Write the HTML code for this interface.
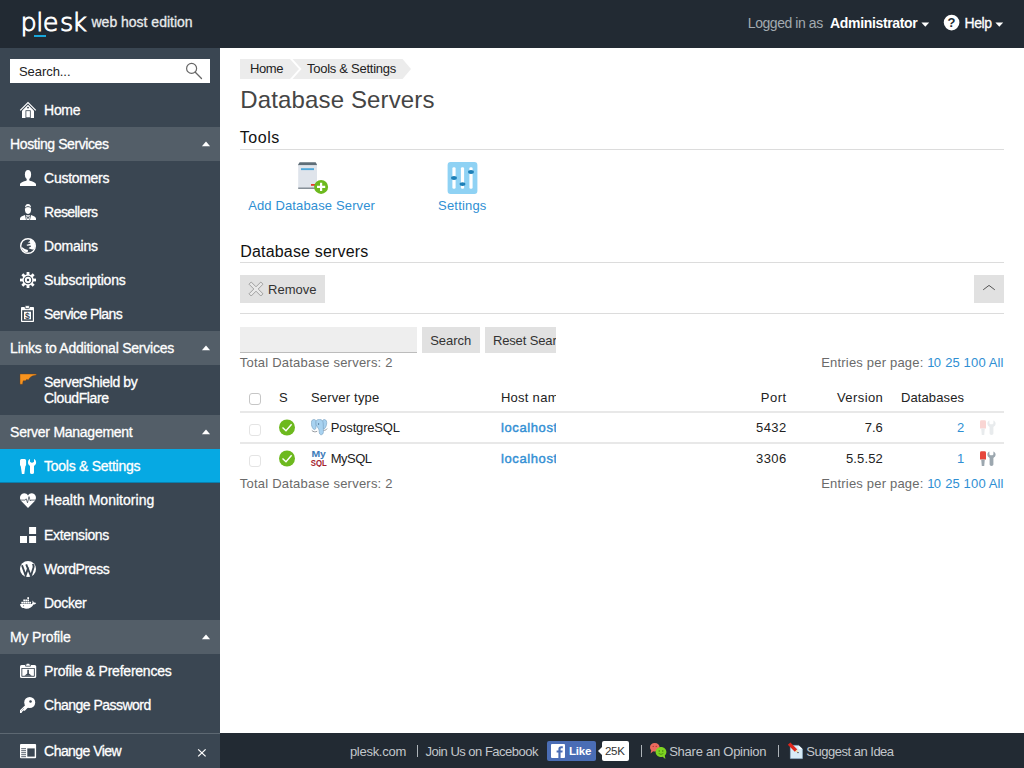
<!DOCTYPE html>
<html lang="en">
<head>
<meta charset="utf-8">
<title>Database Servers - Plesk</title>
<style>
html,body{margin:0;padding:0;}
body{width:1024px;height:768px;overflow:hidden;position:relative;background:#fff;font-family:"Liberation Sans",sans-serif;font-size:13px;color:#222;}
a{text-decoration:none;}
.a{position:absolute;}
.t{position:absolute;white-space:nowrap;display:block;}
#hdr{position:absolute;left:0;top:0;width:1024px;height:48px;background:#222a33;}
#side{position:absolute;left:0;top:48px;width:220px;height:720px;background:#3a4652;}
.sec{position:absolute;left:0;width:220px;height:34px;background:#535e68;}
.sec svg{position:absolute;left:201px;top:13px;}
.ic{position:absolute;left:20px;width:16px;height:16px;overflow:visible;}
.hr{position:absolute;left:240px;width:764px;height:1px;background:#dcdcdc;}
.tr{position:absolute;left:240px;width:764px;height:2px;background:#e8e8e8;}
.btn{position:absolute;background:#e1e1e1;}
.cb{position:absolute;width:10px;height:10px;border:1px solid #c6c6c6;border-radius:3px;background:#fff;}
.cb.d{border-color:#e4e4e4;}
.car{position:absolute;width:0;height:0;border-left:4px solid transparent;border-right:4px solid transparent;border-top:4px solid #fff;}
</style>
</head>
<body>
<div id="hdr"></div>
<div id="side"></div>
<!-- sidebar blocks (absolute page coords) -->
<div class="a" style="left:10px;top:59px;width:200px;height:24px;background:#fff;"></div>
<div class="sec" style="top:127px;"><svg width="10" height="8" viewBox="0 0 10 8"><path d="M0.9 6.3 H9.1 L5 1.6 Z" fill="#fff"/></svg></div>
<div class="sec" style="top:331px;"><svg width="10" height="8" viewBox="0 0 10 8"><path d="M0.9 6.3 H9.1 L5 1.6 Z" fill="#fff"/></svg></div>
<div class="sec" style="top:415px;"><svg width="10" height="8" viewBox="0 0 10 8"><path d="M0.9 6.3 H9.1 L5 1.6 Z" fill="#fff"/></svg></div>
<div class="a" style="left:0;top:449px;width:220px;height:34px;background:#06a9e3;"></div>
<div class="a" style="left:0;top:482px;width:220px;height:1px;background:#0a7fae;"></div>
<div class="sec" style="top:620px;"><svg width="10" height="8" viewBox="0 0 10 8"><path d="M0.9 6.3 H9.1 L5 1.6 Z" fill="#fff"/></svg></div>
<div class="a" style="left:0;top:733px;width:220px;height:1px;background:#5d6872;"></div>
<div class="a" style="left:220px;top:733px;width:804px;height:35px;background:#222a33;"></div>
<!-- plesk logo -->
<div class="t" id="logo" style="left:20.5px;top:-2px;font-family:'DejaVu Sans Light','DejaVu Sans',sans-serif;font-weight:200;font-size:25.6px;line-height:48px;letter-spacing:-0.5px;color:#fff;-webkit-text-stroke:0.95px #fff;">pl<span style="letter-spacing:1.5px">e</span><span style="letter-spacing:-1.4px">s</span>k</div>
<div class="a" style="left:34px;top:35px;width:12px;height:2px;background:#19a7dc;"></div>
<!-- header carets + help -->
<svg class="a" style="left:921px;top:22px;" width="9" height="6" viewBox="0 0 9 6"><path d="M0.4 0.6 H8.2 L4.3 4.8 Z" fill="#fff"/></svg>
<svg class="a" style="left:995px;top:22px;" width="9" height="6" viewBox="0 0 9 6"><path d="M0.4 0.6 H8.2 L4.3 4.8 Z" fill="#fff"/></svg>
<svg class="a" style="left:943px;top:14px;" width="17" height="17" viewBox="0 0 17 17"><circle cx="8.6" cy="8.6" r="7.8" fill="#fff"/><text x="8.6" y="13.2" text-anchor="middle" font-family="Liberation Sans, sans-serif" font-weight="bold" font-size="13" fill="#222a33">?</text></svg>
<!-- search magnifier -->
<svg class="a" style="left:184px;top:61px;" width="20" height="20" viewBox="0 0 20 20"><circle cx="7.6" cy="7.4" r="5" fill="none" stroke="#666" stroke-width="1.2"/><path d="M11.3 11.2 L17.5 17.5" stroke="#666" stroke-width="1.3" stroke-linecap="round"/></svg>
<!-- home -->
<svg class="ic" style="top:102px;" viewBox="0 0 16 16"><path d="M0.2 8.3 L8 0.5 L15.8 8.3" fill="none" stroke="#fff" stroke-width="1.2"/><path d="M2 8.7 L8 2.7 L14 8.7 V16 H2 Z" fill="#fff"/><rect x="5.5" y="8.3" width="5.2" height="7.7" fill="#3a4652"/><rect x="6.3" y="9.1" width="3.6" height="6.2" fill="#fff"/><circle cx="8" cy="5.6" r="0.95" fill="#3a4652"/></svg>
<!-- customers -->
<svg class="ic" style="top:170px;" viewBox="0 0 16 16"><ellipse cx="8" cy="4.6" rx="3.1" ry="4.5" fill="#fff"/><rect x="6.7" y="8" width="2.6" height="4" fill="#fff"/><path d="M0 16 V14.4 C0 12.4 3.2 11.5 6.7 10.4 H9.3 C12.8 11.5 16 12.4 16 14.4 V16 Z" fill="#fff"/></svg>
<!-- resellers -->
<svg class="ic" style="top:204px;" viewBox="0 0 16 16"><ellipse cx="8" cy="5" rx="3.1" ry="4.9" fill="#fff"/><path d="M4.9 4.2 Q8 0.9 11.1 4.2" fill="none" stroke="#3a4652" stroke-width="0.9"/><path d="M0 16 V14.6 C0 12.8 2.4 12 5 11 L6 16 Z" fill="#fff"/><path d="M16 16 V14.6 C16 12.8 13.6 12 11 11 L10 16 Z" fill="#fff"/><path d="M5.9 11.2 H10.1 L9.4 16 H6.6 Z" fill="#fff"/><path d="M6.6 12 L8 14.6 L9.4 12" fill="none" stroke="#3a4652" stroke-width="0.9"/></svg>
<!-- domains -->
<svg class="ic" style="top:238px;" viewBox="0 0 16 16"><circle cx="8" cy="8" r="7.3" fill="none" stroke="#fff" stroke-width="1.4"/><path d="M9.8 1.4 C13 2 15 4.8 15 8 C15 9.4 14.6 10.6 13.8 11.6 C12.2 11.4 10.4 11.2 8.6 10.2 C9 9.4 10.2 9 11 8.4 L10.6 7.4 L7 7.8 L6.6 6.8 L10.4 5.8 L10 4.8 L7.8 4.6 C8.4 3.8 9.2 3.4 10 3 Z" fill="#fff"/><path d="M1.6 9 C3 9.4 4.2 11.4 6.2 11.4 C8 11.4 8.6 12.4 7.6 14 C4.4 14.4 2 12 1.6 9 Z" fill="#fff"/></svg>
<!-- subscriptions gear -->
<svg class="ic" style="top:272px;" viewBox="-8 -8 16 16"><g fill="#fff"><rect x="-1.4" y="-8" width="2.8" height="16"/><rect x="-1.4" y="-8" width="2.8" height="16" transform="rotate(45)"/><rect x="-1.4" y="-8" width="2.8" height="16" transform="rotate(90)"/><rect x="-1.4" y="-8" width="2.8" height="16" transform="rotate(135)"/><circle r="5.7"/></g><circle r="3.7" fill="none" stroke="#3a4652" stroke-width="1.1"/><circle r="1.2" fill="#3a4652"/></svg>
<!-- service plans -->
<svg class="ic" style="top:306px;" viewBox="0 0 16 16"><rect x="1" y="1.1" width="13" height="14.9" rx="0.8" fill="#fff"/><rect x="5.2" y="-0.4" width="4.2" height="3" rx="0.7" fill="#fff" stroke="#3a4652" stroke-width="0.8"/><rect x="2.2" y="4.2" width="10.6" height="10.6" fill="#3a4652"/><rect x="4" y="5.7" width="7" height="7.6" fill="#fff"/><text x="7.5" y="12.7" text-anchor="middle" font-family="Liberation Sans, sans-serif" font-weight="bold" font-size="8.6" fill="#3a4652">$</text></svg>
<!-- servershield -->
<svg class="ic" style="top:374px;" viewBox="0 0 16 16"><path d="M0 0 H16.3 V1 C13 1.4 11 2.4 9.6 4 L8.6 5.8 L6.4 5.6 L5.6 6.8 L3.2 6.8 C2.8 8 2.7 9.4 2.6 10.3 H0 Z" fill="#f7931e" stroke="#6a4018" stroke-width="0.4"/></svg>
<!-- tools -->
<svg class="ic" style="top:458px;" viewBox="0 0 16 16"><path d="M0 2.5 Q0 1 1.5 1 H4.6 Q6.1 1 6.1 2.5 V7 L5.3 8.6 L4.3 16 H1.9 L0.8 8.6 L0 7 Z" fill="#fff"/><path d="M8 4.5 C8 2.8 8.8 1.6 10 1 V3.8 Q12 5.8 14 3.8 V1 C15.2 1.6 16.1 2.8 16.1 4.5 C16.1 6.2 15.2 7.2 14 8 V14.5 Q14 16 12 16 Q10 16 10 14.5 V8 C8.8 7.2 8 6.2 8 4.5 Z" fill="#fff"/></svg>
<!-- health -->
<svg class="ic" style="top:492px;" viewBox="0 0 16 16"><path d="M8 16.1 L1.2 9 C-0.6 6.8 -0.3 3.4 1.9 1.9 C4 0.5 6.8 1.2 8 3.6 C9.2 1.2 12 0.5 14.1 1.9 C16.3 3.4 16.6 6.8 14.8 9 Z" fill="#fff"/><path d="M0 8.1 H5.2 L6.2 6.8 L7.5 10.8 L9 4.6 L10.3 9 L10.9 8.1 H16" fill="none" stroke="#3a4652" stroke-width="0.75"/></svg>
<!-- extensions -->
<svg class="ic" style="top:527px;" viewBox="0 0 16 16"><rect x="9.1" y="0" width="7" height="7" fill="#fff"/><rect x="0" y="9" width="7" height="7" fill="#fff"/><rect x="9.1" y="9" width="7" height="7" fill="#fff"/></svg>
<!-- wordpress -->
<svg class="ic" style="top:561px;" viewBox="0 0 16 16"><circle cx="8" cy="8" r="8" fill="#fff"/><path d="M2 4.2 L5.6 14.4 L8.3 6.4 M6.2 3.4 L10.9 15 L13.5 6.4 C13.9 5 13.5 4 12.7 3" fill="none" stroke="#3a4652" stroke-width="1.9"/></svg>
<!-- docker -->
<svg class="ic" style="top:595px;" viewBox="0 0 16 16"><g fill="#fff"><rect x="7.3" y="2.2" width="1.7" height="1.8"/><rect x="3.3" y="4.5" width="1.7" height="1.8"/><rect x="5.3" y="4.5" width="1.7" height="1.8"/><rect x="7.3" y="4.5" width="1.7" height="1.8"/><rect x="1.3" y="6.8" width="1.7" height="1.8"/><rect x="3.3" y="6.8" width="1.7" height="1.8"/><rect x="5.3" y="6.8" width="1.7" height="1.8"/><rect x="7.3" y="6.8" width="1.7" height="1.8"/><rect x="9.3" y="6.8" width="1.7" height="1.8"/><path d="M0.1 9 H11.8 C12.6 8.2 12.8 6.8 12.2 5.6 C13.2 6.2 13.6 7 13.8 7.6 C14.6 7.3 15.6 7.5 16.2 8 C15.6 9.1 14.4 9.5 13.4 9.5 C12.2 12.2 9.8 13.7 6.2 13.7 C2.4 13.7 0.2 12 0.1 9 Z"/></g><circle cx="3.6" cy="10.8" r="0.55" fill="#3a4652"/></svg>
<!-- profile -->
<svg class="ic" style="top:663px;" viewBox="0 0 16 16"><rect x="0" y="2" width="16.2" height="13" rx="1.6" fill="#fff"/><path d="M5.6 3.2 V1.6 L8 0 L10.4 1.6 V3.2 Z" fill="#fff" stroke="#3a4652" stroke-width="0.8"/><rect x="1.4" y="4.9" width="13.4" height="8.8" rx="0.6" fill="#3a4652"/><rect x="2.3" y="5.8" width="11.6" height="7" fill="#fff"/><path d="M7.3 6.8 H8.9 V10.4 L11.8 12.8 H4.4 L7.3 10.4 Z" fill="#3a4652"/></svg>
<!-- key -->
<svg class="ic" style="top:697px;" viewBox="0 0 16 16"><circle cx="9.7" cy="5.5" r="5.5" fill="#fff"/><path d="M6.4 7 L9 9.6 L4.6 14 L3.8 13.2 L2.8 14.2 L2 14.8 L1.6 16 H0 V13.2 Z" fill="#fff"/><circle cx="10.5" cy="4.5" r="1.25" fill="#3a4652"/><path d="M1.4 13.6 L4.4 10.6" stroke="#3a4652" stroke-width="0.6" stroke-dasharray="0.9 0.5"/></svg>
<!-- change view -->
<svg class="ic" style="top:744px;" viewBox="0 0 16 16"><rect x="0" y="0" width="16.1" height="14.2" rx="1" fill="#fff"/><rect x="7.3" y="4.4" width="7.4" height="8.2" fill="#3a4652"/><path d="M1.2 4.7 H6 M1.2 6.7 H6 M1.2 8.7 H6 M1.2 10.7 H6 M1.2 12.7 H6" stroke="#3a4652" stroke-width="0.85"/></svg>
<svg class="a" style="left:197px;top:748px;" width="10" height="10" viewBox="0 0 10 10"><path d="M1.2 1.4 L8.6 8.4 M8.6 1.4 L1.2 8.4" stroke="#fff" stroke-width="1.3"/></svg>

<!-- breadcrumbs -->
<svg class="a" style="left:240px;top:59px;" width="172" height="20" viewBox="0 0 172 20"><path d="M0 0 H50 L59 10 L50 20 H0 Z" fill="#ececec"/><path d="M52.6 0 H162.5 L171 10 L162.5 20 H52.6 L61.6 10 Z" fill="#ececec"/></svg>
<div class="hr" style="top:149px;"></div>
<!-- add db server icon -->
<svg class="a" style="left:296px;top:160px;" width="36" height="36" viewBox="0 0 36 36"><path d="M2.2 4.4 L3.6 2.2 H19.6 L21 4.4 V5.6 H2.2 Z" fill="#5f6e78"/><rect x="2.2" y="5.2" width="18.8" height="23" fill="#dfe4eb"/><rect x="2.2" y="27.6" width="18.8" height="1.2" fill="#6b7780"/><rect x="5" y="8.2" width="13" height="1.9" fill="#4fa8da"/><rect x="15" y="24" width="4" height="1.8" fill="#e53a2f"/><circle cx="25.1" cy="26.9" r="7" fill="#6db91e"/><path d="M25.1 22.8 V31 M21 26.9 H29.2" stroke="#fff" stroke-width="2.2"/></svg>
<!-- settings icon -->
<svg class="a" style="left:447px;top:162px;" width="32" height="32" viewBox="0 0 32 32"><rect x="0.6" y="0" width="29.8" height="32" rx="3" fill="#8fd2f4"/><g fill="#fff"><rect x="5.4" y="5.2" width="3.2" height="21.6" rx="1.4"/><rect x="13.9" y="5.2" width="3.2" height="21.6" rx="1.4"/><rect x="22.4" y="5.2" width="3.2" height="21.6" rx="1.4"/></g><g fill="#1d80b8"><ellipse cx="7" cy="16" rx="2.9" ry="1.9"/><ellipse cx="15.5" cy="22.1" rx="2.9" ry="1.9"/><ellipse cx="24" cy="10" rx="2.9" ry="1.9"/></g></svg>
<div class="hr" style="top:262px;"></div>
<!-- remove button -->
<div class="btn" style="left:240px;top:275px;width:85px;height:28px;"></div>
<svg class="a" style="left:248px;top:281px;" width="16" height="16" viewBox="0 0 16 16"><path d="M3.2 1 L8 5.8 L12.8 1 L15 3.2 L10.2 8 L15 12.8 L12.8 15 L8 10.2 L3.2 15 L1 12.8 L5.8 8 L1 3.2 Z" fill="#e8e8e8" stroke="#999" stroke-width="0.9" stroke-linejoin="round"/></svg>
<div class="btn" style="left:974px;top:275px;width:30px;height:28px;"></div>
<svg class="a" style="left:981px;top:282px;" width="16" height="12" viewBox="0 0 16 12"><path d="M2.2 7.8 L8 3.4 L13.8 7.8" fill="none" stroke="#555" stroke-width="1"/></svg>
<div class="hr" style="top:313px;"></div>
<!-- search -->
<div class="a" style="left:240px;top:327px;width:177px;height:26px;background:#eee;border-bottom:1px solid #bcbcbc;box-sizing:border-box;"></div>
<div class="btn" style="left:422px;top:327px;width:57.5px;height:26px;"></div>
<div class="btn" style="left:485px;top:327px;width:71px;height:26px;"></div>
<!-- table -->
<div class="cb" style="left:249px;top:393px;"></div>
<div class="tr" style="top:411px;"></div>
<div class="cb d" style="left:249px;top:424px;"></div>
<svg class="a" style="left:279px;top:419px;" width="17" height="17" viewBox="0 0 17 17"><circle cx="8" cy="8.5" r="8" fill="#6db91e"/><path d="M3.5 8.4 L7 11.8 L12.6 5.2" fill="none" stroke="#fff" stroke-width="1.4"/></svg>
<!-- postgres -->
<svg class="a" style="left:311px;top:419px;" width="17" height="17" viewBox="0 0 17 17"><g fill="#a8d2f0" stroke="#7fa6c6" stroke-width="0.7"><path d="M2.6 0.5 C0.6 0.8 0 3 0.4 5.4 C0.8 7.8 1.8 10 3.2 10.6 C4.4 10.8 5 9.6 5 8 L5.2 2 C4.6 0.9 3.6 0.4 2.6 0.5 Z"/><path d="M13.4 0.5 C15.4 0.7 16 2.8 15.6 5.2 C15.2 7.4 14.2 9.6 12.8 10 C12 10 11.6 9 11.8 7.6 L11.4 2 C12 0.9 12.6 0.5 13.4 0.5 Z"/><path d="M5 2.4 C5.6 0.6 7.4 0.3 8.6 0.4 C10.6 0.5 12 1.6 12.2 4 C12.4 6.4 12.2 8.4 12.4 10.4 C12.6 13 12.4 15.2 10.6 15.7 C8.8 16 8.2 14.4 8.2 12.6 C8.2 10.8 7.6 9.6 6.6 8.4 C5.4 7 4.6 4.6 5 2.4 Z"/></g><path d="M0.8 11.4 C2 13 4.6 13.2 6.2 12.2 M12.6 11.4 C14 11.4 15.4 10.8 16.2 9.6" fill="none" stroke="#8a8f94" stroke-width="0.9"/><ellipse cx="7.6" cy="5" rx="0.6" ry="0.9" fill="#5d7f9e"/></svg>
<svg class="a" style="left:979px;top:419px;opacity:0.22;" width="18" height="17" viewBox="0 0 18 17"><path d="M1 2.6 Q1 1.2 2.4 1.2 H5.6 Q7 1.2 7 2.6 V9.4 H1 Z" fill="#e6463c"/><path d="M2.2 9.4 H5.8 L5.2 16 H2.8 Z" fill="#9ca7af"/><path d="M8.4 4.6 C8.4 3 9.2 2 10.4 1.4 V4.4 Q12.4 6.2 14.4 4.4 V1.4 C15.6 2 16.6 3 16.6 4.6 C16.6 6.4 15.4 7.4 14.4 8 V14.6 Q14.4 16 12.5 16 Q10.6 16 10.6 14.6 V8 C9.6 7.4 8.4 6.4 8.4 4.6 Z" fill="#9ca7af"/></svg>
<div class="tr" style="top:442px;"></div>
<div class="cb d" style="left:249px;top:455px;"></div>
<svg class="a" style="left:279px;top:450px;" width="17" height="17" viewBox="0 0 17 17"><circle cx="8" cy="8.5" r="8" fill="#6db91e"/><path d="M3.5 8.4 L7 11.8 L12.6 5.2" fill="none" stroke="#fff" stroke-width="1.4"/></svg>
<!-- mysql -->
<svg class="a" style="left:310px;top:449px;" width="19" height="18" viewBox="0 0 19 18"><text x="1.4" y="8.3" font-family="Liberation Sans, sans-serif" font-weight="bold" font-size="9.4" fill="#3d7cba" textLength="14.5" lengthAdjust="spacingAndGlyphs">My</text><text x="0.8" y="16.7" font-family="Liberation Sans, sans-serif" font-weight="bold" font-size="9.6" fill="#a3212d" textLength="16" lengthAdjust="spacingAndGlyphs">SQL</text></svg>
<svg class="a" style="left:979px;top:450px;" width="18" height="17" viewBox="0 0 18 17"><path d="M1 2.6 Q1 1.2 2.4 1.2 H5.6 Q7 1.2 7 2.6 V9.4 H1 Z" fill="#e6463c"/><path d="M2.2 9.4 H5.8 L5.2 16 H2.8 Z" fill="#9ca7af"/><path d="M8.4 4.6 C8.4 3 9.2 2 10.4 1.4 V4.4 Q12.4 6.2 14.4 4.4 V1.4 C15.6 2 16.6 3 16.6 4.6 C16.6 6.4 15.4 7.4 14.4 8 V14.6 Q14.4 16 12.5 16 Q10.6 16 10.6 14.6 V8 C9.6 7.4 8.4 6.4 8.4 4.6 Z" fill="#9ca7af"/></svg>
<!-- footer -->
<div class="a" style="left:417px;top:745px;width:1px;height:12px;background:#aeb4b9;"></div>
<div class="a" style="left:641px;top:745px;width:1px;height:12px;background:#aeb4b9;"></div>
<div class="a" style="left:778px;top:745px;width:1px;height:12px;background:#aeb4b9;"></div>
<div class="a" style="left:547px;top:741px;width:49px;height:20px;background:#4a6db5;border-radius:2px;"></div>
<svg class="a" style="left:551px;top:744px;" width="14" height="14" viewBox="0 0 14 14"><rect width="14" height="14" rx="1" fill="#fff"/><path d="M9.6 14 V8.6 H11.4 L11.7 6.5 H9.6 V5.2 C9.6 4.5 9.9 4.2 10.6 4.2 H11.8 V2.3 C11.4 2.2 10.8 2.2 10.2 2.2 C8.5 2.2 7.4 3.2 7.4 5 V6.5 H5.6 V8.6 H7.4 V14 Z" fill="#4a6db5"/></svg>
<div class="t" style="left:569px;top:744px;font-size:11.5px;line-height:14px;font-weight:bold;color:#fff;letter-spacing:-0.2px;">Like</div>
<div class="a" style="left:602px;top:741px;width:27px;height:20px;background:#fff;border-radius:2px;"></div>
<div class="a" style="left:598px;top:747px;width:0;height:0;border-top:4px solid transparent;border-bottom:4px solid transparent;border-right:4px solid #fff;"></div>
<div class="t" style="left:605px;top:744px;font-size:11.5px;line-height:14px;color:#333;letter-spacing:-0.3px;">25K</div>
<!-- opinion -->
<svg class="a" style="left:649px;top:742px;" width="19" height="18" viewBox="0 0 19 18"><path d="M5.8 1 C8.6 1 10.6 2.8 10.6 5.2 C10.6 7.6 8.6 9.4 5.8 9.4 C5.2 9.4 4.6 9.3 4.1 9.2 L1.6 11.6 L2.2 8.2 C1.4 7.4 1 6.4 1 5.2 C1 2.8 3 1 5.8 1 Z" fill="#ec6a5e"/><path d="M12 5 C15 5 17.4 7.2 17.4 10 C17.4 11.4 16.8 12.6 15.8 13.6 L16.4 17 L13.6 14.8 C13.1 14.9 12.6 15 12 15 C9 15 6.6 12.8 6.6 10 C6.6 7.2 9 5 12 5 Z" fill="#7ed321"/><circle cx="10.2" cy="9" r="0.7" fill="#3a7d0a"/><circle cx="13.8" cy="9" r="0.7" fill="#3a7d0a"/><path d="M9.6 11.4 Q12 13.4 14.4 11.4" fill="none" stroke="#3a7d0a" stroke-width="0.7"/><circle cx="4.2" cy="4.4" r="0.6" fill="#a8322a"/><circle cx="7.2" cy="4.4" r="0.6" fill="#a8322a"/></svg>
<!-- idea -->
<svg class="a" style="left:787px;top:742px;" width="17" height="18" viewBox="0 0 17 18"><path d="M3.4 3.4 H11.6 L15.4 7 V16.6 H3.4 Z" fill="#d8ecf8" stroke="#9ec3dc" stroke-width="0.6"/><path d="M11.6 3.4 V7 H15.4 Z" fill="#fff"/><path d="M0.8 2.8 L3.4 0.4 L10.4 7.4 L7.8 9.8 Z" fill="#e0261b"/><path d="M8 9.6 L10 7.6 L11.4 10.8 Z" fill="#f3d9a4"/><circle cx="11" cy="10.6" r="0.7" fill="#222"/></svg>

<div class="t" style="left:91.5px;top:14px;font-size:14px;line-height:16px;color:#e8eaec;letter-spacing:-0.006px;-webkit-text-stroke:0.3px #e8eaec;">web host edition</div>
<div class="t" style="left:747.8px;top:15px;font-size:14px;line-height:16px;color:#a3aab0;letter-spacing:-0.435px;">Logged in as</div>
<div class="t" style="left:830.1px;top:15px;font-size:14px;line-height:16px;color:#fff;font-weight:bold;letter-spacing:-0.346px;">Administrator</div>
<div class="t" style="left:964.4px;top:15px;font-size:14px;line-height:16px;color:#fff;letter-spacing:-0.366px;-webkit-text-stroke:0.3px #fff;">Help</div>
<div class="t" style="left:19.0px;top:64px;font-size:13px;line-height:15px;color:#222;letter-spacing:-0.066px;">Search...</div>
<div class="t" style="left:44.1px;top:102px;font-size:14px;line-height:16px;color:#fff;letter-spacing:-0.32px;-webkit-text-stroke:0.3px #fff;">Home</div>
<div class="t" style="left:44.1px;top:170px;font-size:14px;line-height:16px;color:#fff;letter-spacing:-0.286px;-webkit-text-stroke:0.3px #fff;">Customers</div>
<div class="t" style="left:44.1px;top:204px;font-size:14px;line-height:16px;color:#fff;letter-spacing:-0.557px;-webkit-text-stroke:0.3px #fff;">Resellers</div>
<div class="t" style="left:44.1px;top:238px;font-size:14px;line-height:16px;color:#fff;letter-spacing:-0.225px;-webkit-text-stroke:0.3px #fff;">Domains</div>
<div class="t" style="left:44.1px;top:272px;font-size:14px;line-height:16px;color:#fff;letter-spacing:-0.2px;-webkit-text-stroke:0.3px #fff;">Subscriptions</div>
<div class="t" style="left:44.1px;top:306px;font-size:14px;line-height:16px;color:#fff;letter-spacing:-0.579px;-webkit-text-stroke:0.3px #fff;">Service Plans</div>
<div class="t" style="left:44.1px;top:374px;font-size:14px;line-height:16px;color:#fff;letter-spacing:-0.37px;-webkit-text-stroke:0.3px #fff;">ServerShield by</div>
<div class="t" style="left:44.1px;top:390px;font-size:14px;line-height:16px;color:#fff;letter-spacing:-0.398px;-webkit-text-stroke:0.3px #fff;">CloudFlare</div>
<div class="t" style="left:44.1px;top:458px;font-size:14px;line-height:16px;color:#fff;letter-spacing:-0.266px;-webkit-text-stroke:0.3px #fff;">Tools &amp; Settings</div>
<div class="t" style="left:44.1px;top:492px;font-size:14px;line-height:16px;color:#fff;letter-spacing:0.026px;-webkit-text-stroke:0.3px #fff;">Health Monitoring</div>
<div class="t" style="left:44.1px;top:527px;font-size:14px;line-height:16px;color:#fff;letter-spacing:-0.37px;-webkit-text-stroke:0.3px #fff;">Extensions</div>
<div class="t" style="left:44.1px;top:561px;font-size:14px;line-height:16px;color:#fff;letter-spacing:-0.417px;-webkit-text-stroke:0.3px #fff;">WordPress</div>
<div class="t" style="left:44.1px;top:595px;font-size:14px;line-height:16px;color:#fff;letter-spacing:-0.342px;-webkit-text-stroke:0.3px #fff;">Docker</div>
<div class="t" style="left:44.1px;top:663px;font-size:14px;line-height:16px;color:#fff;letter-spacing:-0.232px;-webkit-text-stroke:0.3px #fff;">Profile &amp; Preferences</div>
<div class="t" style="left:44.1px;top:697px;font-size:14px;line-height:16px;color:#fff;letter-spacing:-0.518px;-webkit-text-stroke:0.3px #fff;">Change Password</div>
<div class="t" style="left:44.1px;top:743px;font-size:14px;line-height:16px;color:#fff;letter-spacing:-0.553px;-webkit-text-stroke:0.3px #fff;">Change View</div>
<div class="t" style="left:10.1px;top:136px;font-size:14px;line-height:16px;color:#fff;letter-spacing:-0.41px;-webkit-text-stroke:0.3px #fff;">Hosting Services</div>
<div class="t" style="left:10.1px;top:340px;font-size:14px;line-height:16px;color:#fff;letter-spacing:-0.233px;-webkit-text-stroke:0.3px #fff;">Links to Additional Services</div>
<div class="t" style="left:10.1px;top:424px;font-size:14px;line-height:16px;color:#fff;letter-spacing:-0.262px;-webkit-text-stroke:0.3px #fff;">Server Management</div>
<div class="t" style="left:10.1px;top:629px;font-size:14px;line-height:16px;color:#fff;letter-spacing:-0.176px;-webkit-text-stroke:0.3px #fff;">My Profile</div>
<div class="t" style="left:250.0px;top:61px;font-size:13px;line-height:15px;color:#222;letter-spacing:-0.396px;">Home</div>
<div class="t" style="left:307.0px;top:61px;font-size:13px;line-height:15px;color:#222;letter-spacing:-0.265px;">Tools &amp; Settings</div>
<div class="t" style="left:240.3px;top:86px;font-size:24px;line-height:27px;color:#454545;letter-spacing:0.14px;">Database Servers</div>
<div class="t" style="left:239.8px;top:129px;font-size:16px;line-height:17px;color:#111;letter-spacing:0.523px;">Tools</div>
<a class="t" style="left:248.2px;top:198px;font-size:13px;line-height:15px;color:#2f8fd3;letter-spacing:0.136px;">Add Database Server</a>
<a class="t" style="left:438.1px;top:198px;font-size:13px;line-height:15px;color:#2f8fd3;letter-spacing:0.174px;">Settings</a>
<div class="t" style="left:240.3px;top:243px;font-size:16px;line-height:17px;color:#111;letter-spacing:0.171px;">Database servers</div>
<div class="t" style="left:268.1px;top:282px;font-size:13px;line-height:15px;color:#333;letter-spacing:0.016px;">Remove</div>
<div class="t" style="left:430.2px;top:333px;font-size:13px;line-height:15px;color:#333;letter-spacing:-0.041px;">Search</div>
<div class="t" style="left:492.9px;top:333px;font-size:13px;line-height:15px;color:#333;letter-spacing:-0.133px;width:63.1px;overflow:hidden;">Reset Search</div>
<div class="t" style="left:239.8px;top:355px;font-size:13px;line-height:15px;color:#6a6a6a;letter-spacing:0.221px;">Total Database servers: 2</div>
<div class="t" style="left:239.8px;top:476px;font-size:13px;line-height:15px;color:#6a6a6a;letter-spacing:0.221px;">Total Database servers: 2</div>
<div class="t" style="left:278.9px;top:390px;font-size:13px;line-height:15px;color:#222;">S</div>
<div class="t" style="left:310.9px;top:390px;font-size:13px;line-height:15px;color:#222;letter-spacing:0.187px;">Server type</div>
<div class="t" style="left:500.9px;top:390px;font-size:13px;line-height:15px;color:#222;letter-spacing:0.278px;width:55.1px;overflow:hidden;">Host name</div>
<div class="t" style="right:237.3px;top:390px;font-size:13px;line-height:15px;color:#222;letter-spacing:0.519px;">Port</div>
<div class="t" style="right:140.8px;top:390px;font-size:13px;line-height:15px;color:#222;letter-spacing:0.404px;">Version</div>
<div class="t" style="right:59.8px;top:390px;font-size:13px;line-height:15px;color:#222;letter-spacing:0.13px;">Databases</div>
<div class="t" style="left:330.8px;top:420px;font-size:13px;line-height:15px;color:#222;letter-spacing:-0.181px;">PostgreSQL</div>
<a class="t" style="left:500.9px;top:420px;font-size:13px;line-height:15px;color:#3490d4;letter-spacing:0.623px;width:55.1px;overflow:hidden;-webkit-text-stroke:0.45px #3490d4;">localhost</a>
<div class="t" style="right:237.4px;top:420px;font-size:13px;line-height:15px;color:#222;letter-spacing:0.426px;">5432</div>
<div class="t" style="right:141.1px;top:420px;font-size:13px;line-height:15px;color:#222;letter-spacing:0.061px;">7.6</div>
<a class="t" style="right:59.9px;top:420px;font-size:13px;line-height:15px;color:#2f8fd3;">2</a>
<div class="t" style="left:330.8px;top:451px;font-size:13px;line-height:15px;color:#222;letter-spacing:-0.536px;">MySQL</div>
<a class="t" style="left:500.9px;top:451px;font-size:13px;line-height:15px;color:#3490d4;letter-spacing:0.623px;width:55.1px;overflow:hidden;-webkit-text-stroke:0.45px #3490d4;">localhost</a>
<div class="t" style="right:237.4px;top:451px;font-size:13px;line-height:15px;color:#222;letter-spacing:0.426px;">3306</div>
<div class="t" style="right:141.1px;top:451px;font-size:13px;line-height:15px;color:#222;letter-spacing:0.129px;">5.5.52</div>
<a class="t" style="right:59.9px;top:451px;font-size:13px;line-height:15px;color:#2f8fd3;">1</a>
<a class="t" style="left:349.9px;top:744px;font-size:13px;line-height:15px;color:#c2c7cb;letter-spacing:-0.273px;">plesk.com</a>
<a class="t" style="left:425.5px;top:744px;font-size:13px;line-height:15px;color:#c2c7cb;letter-spacing:-0.513px;">Join Us on Facebook</a>
<a class="t" style="left:669.2px;top:744px;font-size:13px;line-height:15px;color:#c2c7cb;letter-spacing:-0.253px;">Share an Opinion</a>
<a class="t" style="left:806.3px;top:744px;font-size:13px;line-height:15px;color:#c2c7cb;letter-spacing:-0.493px;">Suggest an Idea</a>
<div class="t" style="left:821.2px;top:355px;font-size:13px;line-height:15px;color:#6a6a6a;letter-spacing:0.193px;">Entries per page:</div>
<a class="t" style="left:927.3px;top:355px;font-size:13px;line-height:15px;color:#2f8fd3;letter-spacing:-0.769px;">10</a>
<a class="t" style="left:945.2px;top:355px;font-size:13px;line-height:15px;color:#2f8fd3;letter-spacing:0.031px;">25</a>
<a class="t" style="left:963.5px;top:355px;font-size:13px;line-height:15px;color:#2f8fd3;letter-spacing:0.248px;">100</a>
<a class="t" style="left:988.8px;top:355px;font-size:13px;line-height:15px;color:#2f8fd3;letter-spacing:0.123px;">All</a>
<div class="t" style="left:821.2px;top:476px;font-size:13px;line-height:15px;color:#6a6a6a;letter-spacing:0.193px;">Entries per page:</div>
<a class="t" style="left:927.3px;top:476px;font-size:13px;line-height:15px;color:#2f8fd3;letter-spacing:-0.769px;">10</a>
<a class="t" style="left:945.2px;top:476px;font-size:13px;line-height:15px;color:#2f8fd3;letter-spacing:0.031px;">25</a>
<a class="t" style="left:963.5px;top:476px;font-size:13px;line-height:15px;color:#2f8fd3;letter-spacing:0.248px;">100</a>
<a class="t" style="left:988.8px;top:476px;font-size:13px;line-height:15px;color:#2f8fd3;letter-spacing:0.123px;">All</a>
</body>
</html>
